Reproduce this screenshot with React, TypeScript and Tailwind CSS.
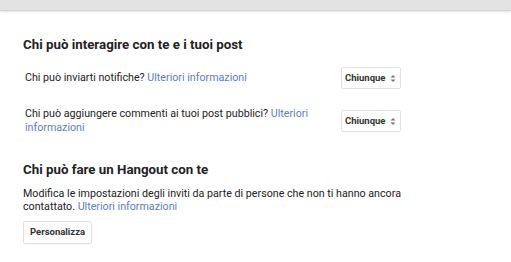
export default function App() {
  const link = "text-[#5b80c4]";

  return (
    <div className="w-[511px] h-[262px] overflow-hidden bg-white font-['Roboto',_'Liberation_Sans',_sans-serif] text-[#222]">
      {/* Barra superiore */}
      <div className="h-[11px] bg-[#e3e3e3] border-b border-[#d6d6d6] shadow-[0_1px_2px_rgba(0,0,0,0.12)]" />

      <div className="pl-[23px] pt-[26px]">
        <h2 className="text-[13.3px] font-bold leading-[16px]">
          Chi può interagire con te e i tuoi post
        </h2>

        {/* Notifiche */}
        <div className="flex items-center mt-[14px]">
          <p className="w-[318px] pl-[2px] text-[10.7px] leading-[14px]">
            Chi può inviarti notifiche?{" "}
            <span className={link}>Ulteriori informazioni</span>
          </p>
          <SelectBox />
        </div>

        {/* Commenti */}
        <div className="flex items-center mt-[18px]">
          <p className="w-[318px] pl-[2px] pr-[20px] text-[10.7px] leading-[14px]">
            Chi può aggiungere commenti ai tuoi post pubblici?{" "}
            <span className={link}>Ulteriori informazioni</span>
          </p>
          <SelectBox />
        </div>

        <h2 className="text-[13.3px] font-bold leading-[16px] mt-[27px]">
          Chi può fare un Hangout con te
        </h2>
        <p className="text-[10.7px] leading-[13px] mt-[9px] w-[400px]">
          Modifica le impostazioni degli inviti da parte di persone che non ti
          hanno ancora contattato.{" "}
          <span className={link}>Ulteriori informazioni</span>
        </p>

        <button className="mt-[8px] h-[23px] px-[6px] border border-[#e2e2e2] rounded-[2px] bg-white text-[9.5px] font-bold text-[#333] shadow-[0_1px_1px_rgba(0,0,0,0.04)]">
          Personalizza
        </button>
      </div>
    </div>
  );
}

function SelectBox() {
  return (
    <div className="h-[22px] w-[60px] flex items-center justify-between pl-[3px] pr-[4px] border border-[#e2e2e2] rounded-[2px] bg-white text-[9.5px] font-bold text-[#333]">
      <span>Chiunque</span>
      <svg width="6" height="9" viewBox="0 0 6 9" className="shrink-0">
        <path d="M0.5 3.5 L3 1 L5.5 3.5 Z" fill="#777" />
        <path d="M0.5 5.5 L3 8 L5.5 5.5 Z" fill="#777" />
      </svg>
    </div>
  );
}
